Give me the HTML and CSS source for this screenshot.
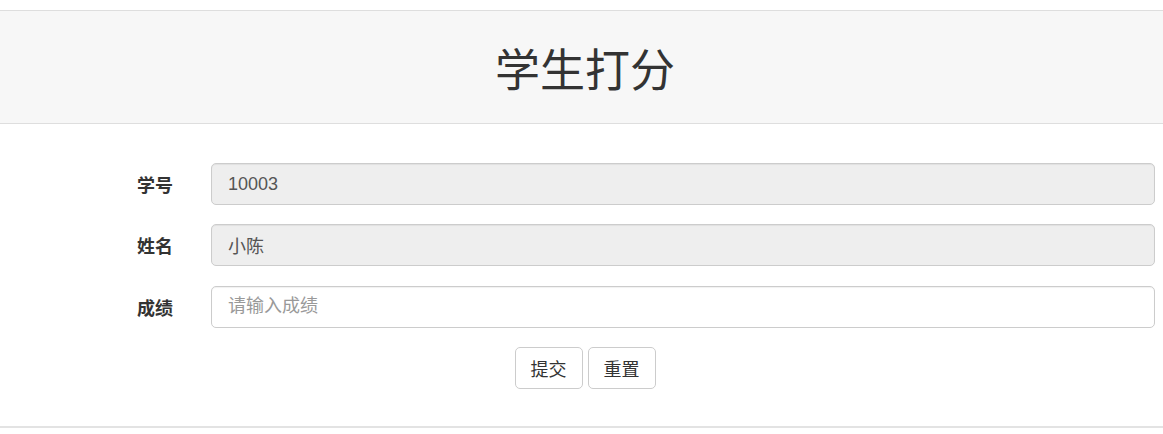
FILE: index.html
```html
<!DOCTYPE html>
<html lang="zh-CN">
<head>
<meta charset="utf-8">
<title>学生打分</title>
<link rel="stylesheet" href="styles.css">
</head>
<body>
<header class="page-header">
  <h1 class="title">学生打分</h1>
</header>
<form class="score-form">
  <div class="form-row">
    <label class="form-label">学号</label>
    <input class="form-input" type="text" value="10003" disabled>
  </div>
  <div class="form-row">
    <label class="form-label">姓名</label>
    <input class="form-input" type="text" value="小陈" disabled>
  </div>
  <div class="form-row">
    <label class="form-label">成绩</label>
    <input class="form-input" type="text" placeholder="请输入成绩">
  </div>
  <div class="form-actions">
    <button class="btn" type="button">提交</button>
    <button class="btn" type="reset">重置</button>
  </div>
</form>
<div class="bottom-rule"></div>
</body>
</html>
```

FILE: styles.css
```css
* { box-sizing: border-box; }
html, body { margin: 0; padding: 0; background: #fff; }
body {
  font-family: "Liberation Sans", Arial, "Noto Sans CJK SC", sans-serif;
  color: #333;
}
.page-header {
  margin-top: 10px;
  height: 114px;
  background: #f7f7f7;
  border-top: 1px solid #dedede;
  border-bottom: 1px solid #dedede;
  display: flex;
  align-items: center;
  justify-content: center;
  padding: 9px 0 0 7px;
}
.title {
  margin: 0;
  font-size: 45px;
  font-weight: normal;
  color: #333;
  line-height: 1;
}
.score-form {
  padding: 39px 8px 0 0;
  display: flex;
  flex-direction: column;
  gap: 19.3px;
}
.form-row {
  display: grid;
  grid-template-columns: 173px 1fr;
  column-gap: 38px;
  align-items: center;
}
.form-label {
  text-align: right;
  font-size: 18px;
  font-weight: bold;
  color: #333;
}
.form-input {
  height: 42px;
  width: 100%;
  border: 1px solid #ccc;
  border-radius: 5px;
  padding: 0 16px;
  font-family: inherit;
  font-size: 18px;
  color: #555;
  background: #fff;
  box-shadow: inset 0 1px 1px rgba(0,0,0,0.06);
}
.form-input:disabled {
  background: #eee;
  color: #555;
  -webkit-text-fill-color: #555;
  opacity: 1;
}
.form-input::placeholder { color: #999; }
.form-actions {
  display: flex;
  justify-content: center;
  gap: 5px;
  padding-left: 15px;
}
.btn {
  height: 42px;
  padding: 0 15px;
  font-family: inherit;
  font-size: 18px;
  color: #333;
  background: #fff;
  border: 1px solid #ccc;
  border-radius: 5px;
}
.bottom-rule {
  margin-top: 37px;
  border-top: 2px solid #e3e3e3;
}
```
